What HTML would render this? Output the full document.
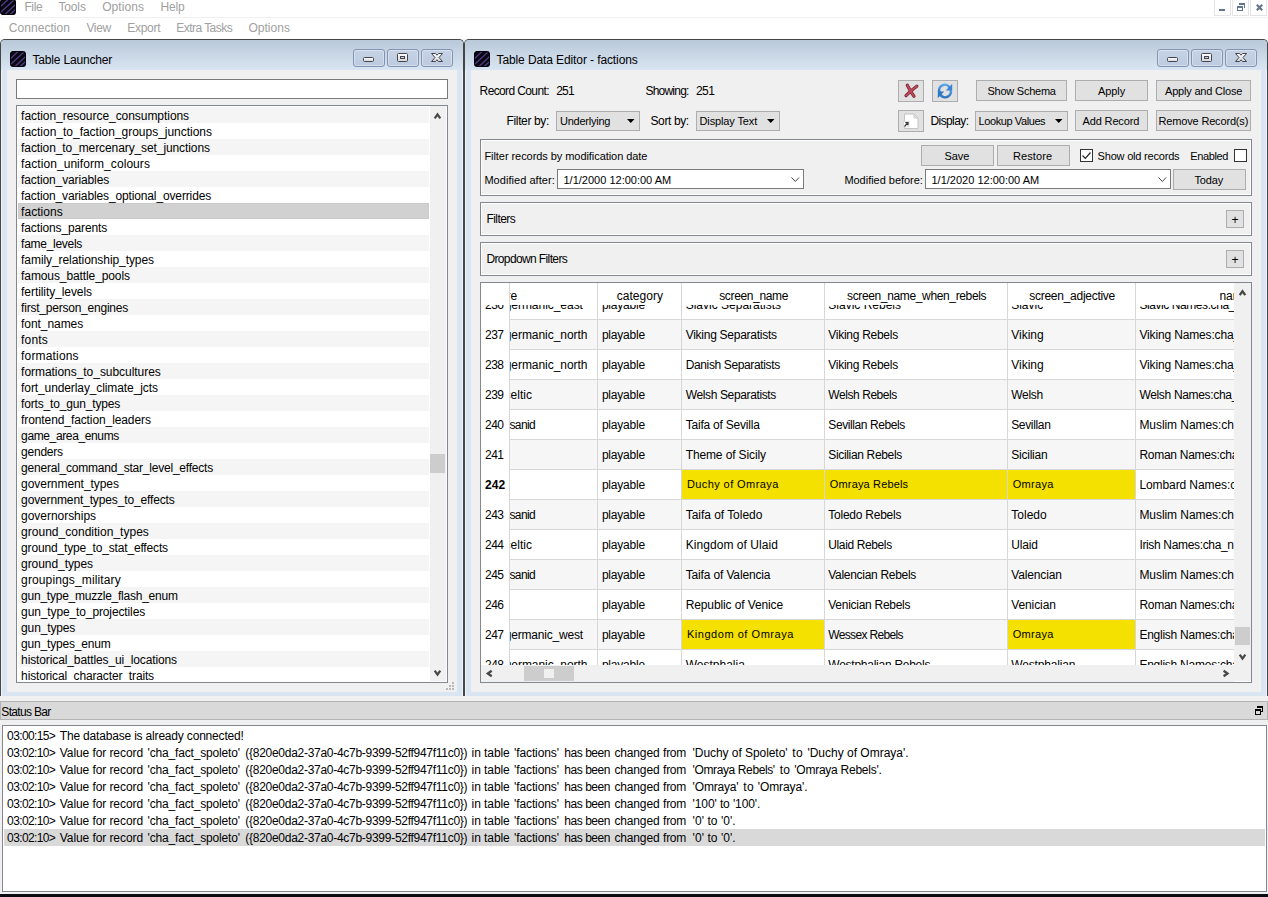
<!DOCTYPE html>
<html><head><meta charset="utf-8"><title>Table Data Editor</title>
<style>
html,body{margin:0;padding:0}
body{width:1268px;height:897px;overflow:hidden;position:relative;background:#f0f0f0;font-family:"Liberation Sans",sans-serif;font-size:12px;color:#000}
.t{position:absolute;white-space:pre;display:block}
.btn{position:absolute;box-sizing:border-box;border:1px solid #adadad;background:#e1e1e1}
.frame{position:absolute;box-sizing:border-box;border:1px solid #828790;box-shadow:inset 1px 1px 0 #fff,inset -1px -1px 0 #fff}
.win{position:absolute;box-sizing:border-box;border:1px solid #454545;border-bottom:none;border-radius:5px 5px 0 0;background:#d9e5f2;overflow:hidden;box-shadow:inset 1px 1px 0 rgba(255,255,255,.6),inset -1px 0 0 rgba(255,255,255,.6)}
.wt{position:absolute;left:0;top:0;right:0;height:30px;background:linear-gradient(#b9c9da,#d9e5f2)}
.tb{position:absolute;box-sizing:border-box;border:1px solid #8493b4;border-radius:3px;background:linear-gradient(#c6d3e5,#bccbe0);box-shadow:inset 0 0 0 1px rgba(255,255,255,.35)}
.clip{position:absolute;overflow:hidden}
</style></head>
<body>
<div style="position:absolute;left:0px;top:0px;width:1268px;height:39px;background:#fff"></div>
<div style="position:absolute;left:0px;top:17px;width:1268px;height:1px;background:#f0f0f0"></div>
<svg width="16" height="16" viewBox="0 0 16 16" style="position:absolute;left:0px;top:-1px"><defs><clipPath id="c0"><rect x="0" y="0" width="16" height="16" rx="3.5"/></clipPath></defs><rect width="16" height="16" rx="3.5" fill="#0a0612"/><g clip-path="url(#c0)" stroke="#4e3f88" stroke-width="1.300"><path d="M-1 9L9 -.4M-1 14.800L16 -.800M3 17.400L17 4.100M8 17.400L17 9.100M13.500 17L17 13.800"/></g><rect x=".5" y=".5" width="15" height="15" rx="3.2" fill="none" stroke="#000" stroke-width="1"/></svg>
<span class="t" style="left:24.4px;top:-1px;height:16px;line-height:16px;font-size:12px;font-weight:normal;color:#a0a0a0;letter-spacing:-0.361px;">File</span>
<span class="t" style="left:58.4px;top:-1px;height:16px;line-height:16px;font-size:12px;font-weight:normal;color:#a0a0a0;letter-spacing:-0.123px;">Tools</span>
<span class="t" style="left:102.2px;top:-1px;height:16px;line-height:16px;font-size:12px;font-weight:normal;color:#a0a0a0;letter-spacing:0.063px;">Options</span>
<span class="t" style="left:160.4px;top:-1px;height:16px;line-height:16px;font-size:12px;font-weight:normal;color:#a0a0a0;letter-spacing:-0.097px;">Help</span>
<span class="t" style="left:8.8px;top:20px;height:16px;line-height:16px;font-size:12px;font-weight:normal;color:#a0a0a0;letter-spacing:0.048px;">Connection</span>
<span class="t" style="left:86.4px;top:20px;height:16px;line-height:16px;font-size:12px;font-weight:normal;color:#a0a0a0;letter-spacing:-0.324px;">View</span>
<span class="t" style="left:127.3px;top:20px;height:16px;line-height:16px;font-size:12px;font-weight:normal;color:#a0a0a0;letter-spacing:-0.298px;">Export</span>
<span class="t" style="left:176.3px;top:20px;height:16px;line-height:16px;font-size:12px;font-weight:normal;color:#a0a0a0;letter-spacing:-0.547px;">Extra Tasks</span>
<span class="t" style="left:248.4px;top:20px;height:16px;line-height:16px;font-size:12px;font-weight:normal;color:#a0a0a0;letter-spacing:0.034px;">Options</span>
<div style="position:absolute;left:1214px;top:-1px;width:17px;height:17px;box-sizing:border-box;border:1px solid #e5e5e5;background:#fff"></div>
<div style="position:absolute;left:1232px;top:-1px;width:17px;height:17px;box-sizing:border-box;border:1px solid #e5e5e5;background:#fff"></div>
<div style="position:absolute;left:1250px;top:-1px;width:17px;height:17px;box-sizing:border-box;border:1px solid #e5e5e5;background:#fff"></div>
<svg width="54" height="16" style="position:absolute;left:1214px;top:0" fill="#64758a"><g shape-rendering="crispEdges"><rect x="5" y="9" width="6" height="2"/><rect x="25" y="3" width="6" height="2"/><rect x="30" y="3" width="1" height="5"/><rect x="23" y="6" width="6" height="2"/><rect x="23" y="6" width="1" height="5"/><rect x="28" y="6" width="1" height="5"/><rect x="23" y="10" width="6" height="1"/></g><path d="M42.800 4.800l5.400 5.400M48.200 4.800l-5.400 5.400" stroke="#64758a" stroke-width="2.100" fill="none"/></svg>
<svg width="0" height="0" style="position:absolute"><defs><linearGradient id="wg" x1="0" y1="0" x2="0" y2="1"><stop offset="0" stop-color="#fff"/><stop offset="1" stop-color="#d4d4d8"/></linearGradient><linearGradient id="bg" x1="0" y1="0" x2="0" y2="1"><stop offset="0" stop-color="#5aa6e6"/><stop offset="1" stop-color="#2a74c0"/></linearGradient></defs></svg>
<div class="win" style="left:0px;top:39px;width:464px;height:657px"><div class="wt"></div></div>
<svg width="16" height="16" viewBox="0 0 16 16" style="position:absolute;left:10px;top:51px"><defs><clipPath id="c1"><rect x="0" y="0" width="16" height="16" rx="3.5"/></clipPath></defs><rect width="16" height="16" rx="3.5" fill="#0a0612"/><g clip-path="url(#c1)" stroke="#4e3f88" stroke-width="1.300"><path d="M-1 9L9 -.4M-1 14.800L16 -.800M3 17.400L17 4.100M8 17.400L17 9.100M13.500 17L17 13.800"/></g><rect x=".5" y=".5" width="15" height="15" rx="3.2" fill="none" stroke="#000" stroke-width="1"/></svg>
<span class="t" style="left:32.5px;top:52px;height:16px;line-height:16px;font-size:12px;font-weight:normal;color:#000;letter-spacing:-0.169px;">Table Launcher</span>
<div class="win" style="left:464px;top:39px;width:804px;height:657px"><div class="wt"></div></div>
<svg width="16" height="16" viewBox="0 0 16 16" style="position:absolute;left:474px;top:51px"><defs><clipPath id="c2"><rect x="0" y="0" width="16" height="16" rx="3.5"/></clipPath></defs><rect width="16" height="16" rx="3.5" fill="#0a0612"/><g clip-path="url(#c2)" stroke="#4e3f88" stroke-width="1.300"><path d="M-1 9L9 -.4M-1 14.800L16 -.800M3 17.400L17 4.100M8 17.400L17 9.100M13.500 17L17 13.800"/></g><rect x=".5" y=".5" width="15" height="15" rx="3.2" fill="none" stroke="#000" stroke-width="1"/></svg>
<span class="t" style="left:496.5px;top:52px;height:16px;line-height:16px;font-size:12px;font-weight:normal;color:#000;letter-spacing:-0.103px;">Table Data Editor - factions</span>
<div style="position:absolute;left:7px;top:70px;width:450px;height:622px;background:#f0f0f0"></div>
<div style="position:absolute;left:471px;top:70px;width:790px;height:622px;background:#f0f0f0"></div>
<div class="tb" style="left:353px;top:49px;width:32px;height:18px"></div>
<svg width="32" height="18" style="position:absolute;left:353px;top:49px"><rect x="10.500" y="8.500" width="10" height="4" rx="1" fill="url(#wg)" stroke="#45454f"/></svg>
<div class="tb" style="left:387px;top:49px;width:32px;height:18px"></div>
<svg width="32" height="18" style="position:absolute;left:387px;top:49px"><rect x="10.500" y="4.500" width="10" height="8" rx="1" fill="url(#wg)" stroke="#45454f"/><rect x="13.500" y="7.500" width="4" height="2" fill="#c3d0e3" stroke="#45454f"/></svg>
<div class="tb" style="left:421px;top:49px;width:32px;height:18px"></div>
<svg width="32" height="18" style="position:absolute;left:421px;top:49px"><path d="M10.500 4.500h4l1.500 1.700 1.500-1.700h4l-3.500 4 3.500 4h-4l-1.500-1.700-1.500 1.700h-4l3.500-4z" fill="url(#wg)" stroke="#45454f" stroke-linejoin="round"/></svg>
<div class="tb" style="left:1157px;top:49px;width:32px;height:18px"></div>
<svg width="32" height="18" style="position:absolute;left:1157px;top:49px"><rect x="10.500" y="8.500" width="10" height="4" rx="1" fill="url(#wg)" stroke="#45454f"/></svg>
<div class="tb" style="left:1191px;top:49px;width:32px;height:18px"></div>
<svg width="32" height="18" style="position:absolute;left:1191px;top:49px"><rect x="10.500" y="4.500" width="10" height="8" rx="1" fill="url(#wg)" stroke="#45454f"/><rect x="13.500" y="7.500" width="4" height="2" fill="#c3d0e3" stroke="#45454f"/></svg>
<div class="tb" style="left:1225px;top:49px;width:32px;height:18px"></div>
<svg width="32" height="18" style="position:absolute;left:1225px;top:49px"><path d="M10.500 4.500h4l1.500 1.700 1.500-1.700h4l-3.500 4 3.500 4h-4l-1.500-1.700-1.500 1.700h-4l3.500-4z" fill="url(#wg)" stroke="#45454f" stroke-linejoin="round"/></svg>
<div style="position:absolute;left:16px;top:79px;width:432px;height:20px;box-sizing:border-box;border:1px solid #7a7a7a;background:#fff"></div>
<div style="position:absolute;left:16px;top:105px;width:432px;height:578px;box-sizing:border-box;border:1px solid #828790;background:#fff"></div>
<div style="position:absolute;left:18px;top:107px;width:411px;height:16px;background:#f5f5f5"></div>
<span class="t" style="left:21.1px;top:107.5px;height:16px;line-height:16px;font-size:12px;font-weight:normal;color:#000;letter-spacing:-0.050px;">faction_resource_consumptions</span>
<span class="t" style="left:21.1px;top:123.5px;height:16px;line-height:16px;font-size:12px;font-weight:normal;color:#000;letter-spacing:-0.016px;">faction_to_faction_groups_junctions</span>
<div style="position:absolute;left:18px;top:139px;width:411px;height:16px;background:#f5f5f5"></div>
<span class="t" style="left:21.1px;top:139.5px;height:16px;line-height:16px;font-size:12px;font-weight:normal;color:#000;letter-spacing:-0.098px;">faction_to_mercenary_set_junctions</span>
<span class="t" style="left:21.1px;top:155.5px;height:16px;line-height:16px;font-size:12px;font-weight:normal;color:#000;letter-spacing:0.065px;">faction_uniform_colours</span>
<div style="position:absolute;left:18px;top:171px;width:411px;height:16px;background:#f5f5f5"></div>
<span class="t" style="left:21.1px;top:171.5px;height:16px;line-height:16px;font-size:12px;font-weight:normal;color:#000;letter-spacing:-0.121px;">faction_variables</span>
<span class="t" style="left:21.1px;top:187.5px;height:16px;line-height:16px;font-size:12px;font-weight:normal;color:#000;letter-spacing:-0.133px;">faction_variables_optional_overrides</span>
<div style="position:absolute;left:18px;top:203px;width:411px;height:16px;box-sizing:border-box;border:1px solid #cbcbcb;background:#d1d1d1"></div>
<span class="t" style="left:21.1px;top:203.5px;height:16px;line-height:16px;font-size:12px;font-weight:normal;color:#000;letter-spacing:0.043px;">factions</span>
<span class="t" style="left:21.1px;top:219.5px;height:16px;line-height:16px;font-size:12px;font-weight:normal;color:#000;letter-spacing:-0.123px;">factions_parents</span>
<div style="position:absolute;left:18px;top:235px;width:411px;height:16px;background:#f5f5f5"></div>
<span class="t" style="left:21.1px;top:235.5px;height:16px;line-height:16px;font-size:12px;font-weight:normal;color:#000;letter-spacing:-0.285px;">fame_levels</span>
<span class="t" style="left:21.1px;top:251.5px;height:16px;line-height:16px;font-size:12px;font-weight:normal;color:#000;letter-spacing:-0.074px;">family_relationship_types</span>
<div style="position:absolute;left:18px;top:267px;width:411px;height:16px;background:#f5f5f5"></div>
<span class="t" style="left:21.1px;top:267.5px;height:16px;line-height:16px;font-size:12px;font-weight:normal;color:#000;letter-spacing:-0.103px;">famous_battle_pools</span>
<span class="t" style="left:21.1px;top:283.5px;height:16px;line-height:16px;font-size:12px;font-weight:normal;color:#000;letter-spacing:-0.071px;">fertility_levels</span>
<div style="position:absolute;left:18px;top:299px;width:411px;height:16px;background:#f5f5f5"></div>
<span class="t" style="left:21.1px;top:299.5px;height:16px;line-height:16px;font-size:12px;font-weight:normal;color:#000;letter-spacing:-0.225px;">first_person_engines</span>
<span class="t" style="left:21.1px;top:315.5px;height:16px;line-height:16px;font-size:12px;font-weight:normal;color:#000;letter-spacing:-0.072px;">font_names</span>
<div style="position:absolute;left:18px;top:331px;width:411px;height:16px;background:#f5f5f5"></div>
<span class="t" style="left:21.1px;top:331.5px;height:16px;line-height:16px;font-size:12px;font-weight:normal;color:#000;letter-spacing:0.177px;">fonts</span>
<span class="t" style="left:21.1px;top:347.5px;height:16px;line-height:16px;font-size:12px;font-weight:normal;color:#000;letter-spacing:0.167px;">formations</span>
<div style="position:absolute;left:18px;top:363px;width:411px;height:16px;background:#f5f5f5"></div>
<span class="t" style="left:21.1px;top:363.5px;height:16px;line-height:16px;font-size:12px;font-weight:normal;color:#000;letter-spacing:-0.042px;">formations_to_subcultures</span>
<span class="t" style="left:21.1px;top:379.5px;height:16px;line-height:16px;font-size:12px;font-weight:normal;color:#000;letter-spacing:-0.104px;">fort_underlay_climate_jcts</span>
<div style="position:absolute;left:18px;top:395px;width:411px;height:16px;background:#f5f5f5"></div>
<span class="t" style="left:21.1px;top:395.5px;height:16px;line-height:16px;font-size:12px;font-weight:normal;color:#000;letter-spacing:-0.171px;">forts_to_gun_types</span>
<span class="t" style="left:21.1px;top:411.5px;height:16px;line-height:16px;font-size:12px;font-weight:normal;color:#000;letter-spacing:-0.100px;">frontend_faction_leaders</span>
<div style="position:absolute;left:18px;top:427px;width:411px;height:16px;background:#f5f5f5"></div>
<span class="t" style="left:21.1px;top:427.5px;height:16px;line-height:16px;font-size:12px;font-weight:normal;color:#000;letter-spacing:-0.374px;">game_area_enums</span>
<span class="t" style="left:21.1px;top:443.5px;height:16px;line-height:16px;font-size:12px;font-weight:normal;color:#000;letter-spacing:-0.239px;">genders</span>
<div style="position:absolute;left:18px;top:459px;width:411px;height:16px;background:#f5f5f5"></div>
<span class="t" style="left:21.1px;top:459.5px;height:16px;line-height:16px;font-size:12px;font-weight:normal;color:#000;letter-spacing:-0.216px;">general_command_star_level_effects</span>
<span class="t" style="left:21.1px;top:475.5px;height:16px;line-height:16px;font-size:12px;font-weight:normal;color:#000;letter-spacing:-0.058px;">government_types</span>
<div style="position:absolute;left:18px;top:491px;width:411px;height:16px;background:#f5f5f5"></div>
<span class="t" style="left:21.1px;top:491.5px;height:16px;line-height:16px;font-size:12px;font-weight:normal;color:#000;letter-spacing:-0.134px;">government_types_to_effects</span>
<span class="t" style="left:21.1px;top:507.5px;height:16px;line-height:16px;font-size:12px;font-weight:normal;color:#000;letter-spacing:-0.037px;">governorships</span>
<div style="position:absolute;left:18px;top:523px;width:411px;height:16px;background:#f5f5f5"></div>
<span class="t" style="left:21.1px;top:523.5px;height:16px;line-height:16px;font-size:12px;font-weight:normal;color:#000;letter-spacing:0.016px;">ground_condition_types</span>
<span class="t" style="left:21.1px;top:539.5px;height:16px;line-height:16px;font-size:12px;font-weight:normal;color:#000;letter-spacing:-0.164px;">ground_type_to_stat_effects</span>
<div style="position:absolute;left:18px;top:555px;width:411px;height:16px;background:#f5f5f5"></div>
<span class="t" style="left:21.1px;top:555.5px;height:16px;line-height:16px;font-size:12px;font-weight:normal;color:#000;letter-spacing:-0.070px;">ground_types</span>
<span class="t" style="left:21.1px;top:571.5px;height:16px;line-height:16px;font-size:12px;font-weight:normal;color:#000;letter-spacing:0.128px;">groupings_military</span>
<div style="position:absolute;left:18px;top:587px;width:411px;height:16px;background:#f5f5f5"></div>
<span class="t" style="left:21.1px;top:587.5px;height:16px;line-height:16px;font-size:12px;font-weight:normal;color:#000;letter-spacing:-0.238px;">gun_type_muzzle_flash_enum</span>
<span class="t" style="left:21.1px;top:603.5px;height:16px;line-height:16px;font-size:12px;font-weight:normal;color:#000;letter-spacing:-0.120px;">gun_type_to_projectiles</span>
<div style="position:absolute;left:18px;top:619px;width:411px;height:16px;background:#f5f5f5"></div>
<span class="t" style="left:21.1px;top:619.5px;height:16px;line-height:16px;font-size:12px;font-weight:normal;color:#000;letter-spacing:-0.143px;">gun_types</span>
<span class="t" style="left:21.1px;top:635.5px;height:16px;line-height:16px;font-size:12px;font-weight:normal;color:#000;letter-spacing:-0.184px;">gun_types_enum</span>
<div style="position:absolute;left:18px;top:651px;width:411px;height:16px;background:#f5f5f5"></div>
<span class="t" style="left:21.1px;top:651.5px;height:16px;line-height:16px;font-size:12px;font-weight:normal;color:#000;letter-spacing:-0.114px;">historical_battles_ui_locations</span>
<span class="t" style="left:21.1px;top:667.5px;height:16px;line-height:16px;font-size:12px;font-weight:normal;color:#000;letter-spacing:-0.142px;height:14px;overflow:hidden;">historical_character_traits</span>
<div style="position:absolute;left:17px;top:681px;width:413px;height:1px;background:#fff"></div>
<div style="position:absolute;left:430px;top:106px;width:16px;height:575px;background:#f0f0f0"></div>
<div style="position:absolute;left:430px;top:454px;width:15px;height:19px;background:#cdcdcd"></div>
<svg width="17" height="576" style="position:absolute;left:430px;top:106px" fill="none" stroke="#484848" stroke-width="2.300"><path d="M4.700 12.300l2.800-3.900 2.800 3.900"/><path d="M4.700 564.700l2.800 3.900 2.800-3.900"/></svg>
<svg width="12" height="12" style="position:absolute;left:445px;top:680px" fill="#b9b9b9" shape-rendering="crispEdges"><rect x="7" y="2" width="2" height="2"/><rect x="4" y="5" width="2" height="2"/><rect x="7" y="5" width="2" height="2"/><rect x="1" y="8" width="2" height="2"/><rect x="4" y="8" width="2" height="2"/><rect x="7" y="8" width="2" height="2"/></svg>
<span class="t" style="left:479.6px;top:83px;height:16px;line-height:16px;font-size:12px;font-weight:normal;color:#000;letter-spacing:-0.621px;">Record Count:</span>
<span class="t" style="left:556.3px;top:83px;height:16px;line-height:16px;font-size:12px;font-weight:normal;color:#000;letter-spacing:-0.877px;">251</span>
<span class="t" style="left:645.4px;top:83px;height:16px;line-height:16px;font-size:12px;font-weight:normal;color:#000;letter-spacing:-0.759px;">Showing:</span>
<span class="t" style="left:696px;top:83px;height:16px;line-height:16px;font-size:12px;font-weight:normal;color:#000;letter-spacing:-0.610px;">251</span>
<span class="t" style="left:506.6px;top:113px;height:16px;line-height:16px;font-size:12px;font-weight:normal;color:#000;letter-spacing:-0.372px;">Filter by:</span>
<span class="t" style="left:650.5px;top:113px;height:16px;line-height:16px;font-size:12px;font-weight:normal;color:#000;letter-spacing:-0.382px;">Sort by:</span>
<div class="btn" style="left:556px;top:111px;width:84px;height:20px"></div>
<span class="t" style="left:560px;top:113px;height:16px;line-height:16px;font-size:11px;font-weight:normal;color:#000;letter-spacing:-0.239px;">Underlying</span>
<svg width="8" height="5" style="position:absolute;left:626.5px;top:119px"><path d="M0 0h7.500l-3.750 4z" fill="#000"/></svg>
<div class="btn" style="left:696px;top:111px;width:84px;height:20px"></div>
<span class="t" style="left:699.5px;top:113px;height:16px;line-height:16px;font-size:11px;font-weight:normal;color:#000;letter-spacing:-0.117px;">Display Text</span>
<svg width="8" height="5" style="position:absolute;left:766.5px;top:119px"><path d="M0 0h7.500l-3.750 4z" fill="#000"/></svg>
<div class="btn" style="left:975px;top:111px;width:93px;height:20px"></div>
<span class="t" style="left:978.5px;top:113px;height:16px;line-height:16px;font-size:11px;font-weight:normal;color:#000;letter-spacing:-0.405px;">Lookup Values</span>
<svg width="8" height="5" style="position:absolute;left:1054.5px;top:119px"><path d="M0 0h7.500l-3.750 4z" fill="#000"/></svg>
<div class="btn" style="left:898px;top:80px;width:26px;height:22px"></div>
<div class="btn" style="left:932px;top:80px;width:26px;height:22px"></div>
<div class="btn" style="left:898px;top:110px;width:26px;height:22px"></div>
<svg width="26" height="22" style="position:absolute;left:898px;top:80px" fill="none" stroke-linecap="round"><path d="M9.300 5.200C11 8.500 13.500 13 16 16.300M18.800 6.200C15 9 11 12.500 8 15.600" stroke="#6e2230" stroke-width="3.200"/><path d="M9.300 5.200C11 8.500 13.500 13 16 16.300M18.800 6.200C15 9 11 12.500 8 15.600" stroke="#c44a5a" stroke-width="1.800"/></svg>
<svg width="26" height="22" style="position:absolute;left:932px;top:80px" fill="none"><path d="M7.600 12.500a5.600 5.600 0 0 1 10-5" stroke="url(#bg)" stroke-width="2.600"/><path d="M18.400 9.500a5.600 5.600 0 0 1-10 5" stroke="url(#bg)" stroke-width="2.600"/><path d="M20.200 3.800v6.600h-6.400z" fill="#3a86d4"/><path d="M5.800 18.200v-6.600h6.400z" fill="#2f78c6"/></svg>
<svg width="26" height="22" style="position:absolute;left:898px;top:110px"><path d="M6.500 4h9.500l4 4v10.500h-13.500z" fill="#fff" stroke="#c4c4c4"/><path d="M16 4v4h4z" fill="#e4e4e4" stroke="#c4c4c4" stroke-width=".8"/><rect x="5.500" y="11.500" width="5.500" height="5.500" fill="#fafafa" stroke="#d0d0d0" stroke-width=".6"/><path d="M6.500 16.500l3.200-3.600M7.300 12.600h2.700v2.700" stroke="#3a3a3a" fill="none" stroke-width="1.200"/></svg>
<span class="t" style="left:930.5px;top:113px;height:16px;line-height:16px;font-size:12px;font-weight:normal;color:#000;letter-spacing:-0.598px;">Display:</span>
<div class="btn" style="left:976px;top:80px;width:91px;height:21px"></div>
<span class="t" style="left:987.5px;top:82.5px;height:16px;line-height:16px;font-size:11px;font-weight:normal;color:#000;letter-spacing:-0.249px;">Show Schema</span>
<div class="btn" style="left:1075px;top:80px;width:73px;height:21px"></div>
<span class="t" style="left:1098px;top:82.5px;height:16px;line-height:16px;font-size:11px;font-weight:normal;color:#000;letter-spacing:-0.066px;">Apply</span>
<div class="btn" style="left:1156px;top:80px;width:95px;height:21px"></div>
<span class="t" style="left:1165px;top:82.5px;height:16px;line-height:16px;font-size:11px;font-weight:normal;color:#000;letter-spacing:-0.194px;">Apply and Close</span>
<div class="btn" style="left:1075px;top:110px;width:73px;height:21px"></div>
<span class="t" style="left:1082.5px;top:112.5px;height:16px;line-height:16px;font-size:11px;font-weight:normal;color:#000;letter-spacing:-0.139px;">Add Record</span>
<div class="btn" style="left:1156px;top:110px;width:95px;height:21px"></div>
<span class="t" style="left:1158.5px;top:112.5px;height:16px;line-height:16px;font-size:11px;font-weight:normal;color:#000;letter-spacing:-0.163px;">Remove Record(s)</span>
<div class="frame" style="left:480px;top:139px;width:772px;height:57px"></div>
<span class="t" style="left:484.4px;top:148px;height:16px;line-height:16px;font-size:11px;font-weight:normal;color:#000;letter-spacing:-0.059px;">Filter records by modification date</span>
<span class="t" style="left:484.4px;top:172px;height:16px;line-height:16px;font-size:11px;font-weight:normal;color:#000;letter-spacing:0.046px;">Modified after:</span>
<span class="t" style="left:844.4px;top:172px;height:16px;line-height:16px;font-size:11px;font-weight:normal;color:#000;letter-spacing:-0.024px;">Modified before:</span>
<div style="position:absolute;left:557px;top:169px;width:247px;height:20px;box-sizing:border-box;border:1px solid #7a7a7a;background:#fff"></div>
<span class="t" style="left:563.5px;top:172px;height:16px;line-height:16px;font-size:11px;font-weight:normal;color:#000;letter-spacing:0.002px;">1/1/2000 12:00:00 AM</span>
<svg width="10" height="6" style="position:absolute;left:790.5px;top:177px" fill="none" stroke="#444" stroke-width="1"><path d="M.5 .5l3.800 4 3.800-4"/></svg>
<div style="position:absolute;left:925px;top:169px;width:246px;height:20px;box-sizing:border-box;border:1px solid #7a7a7a;background:#fff"></div>
<span class="t" style="left:931.5px;top:172px;height:16px;line-height:16px;font-size:11px;font-weight:normal;color:#000;letter-spacing:0.002px;">1/1/2020 12:00:00 AM</span>
<svg width="10" height="6" style="position:absolute;left:1157.5px;top:177px" fill="none" stroke="#444" stroke-width="1"><path d="M.5 .5l3.800 4 3.800-4"/></svg>
<div class="btn" style="left:921px;top:145px;width:73px;height:21px"></div>
<span class="t" style="left:944.5px;top:147.5px;height:16px;line-height:16px;font-size:11px;font-weight:normal;color:#000;letter-spacing:-0.095px;">Save</span>
<div class="btn" style="left:997px;top:145px;width:73px;height:21px"></div>
<span class="t" style="left:1013px;top:147.5px;height:16px;line-height:16px;font-size:11px;font-weight:normal;color:#000;letter-spacing:0.096px;">Restore</span>
<div style="position:absolute;left:1080px;top:149px;width:13px;height:13px;box-sizing:border-box;border:1px solid #333;background:#fff"></div>
<svg width="13" height="13" style="position:absolute;left:1080px;top:149px" fill="none" stroke="#222" stroke-width="1.2"><path d="M2.500 6.500l2.800 2.800 5.200-5.800"/></svg>
<span class="t" style="left:1097.6px;top:148px;height:16px;line-height:16px;font-size:11px;font-weight:normal;color:#000;letter-spacing:-0.200px;">Show old records</span>
<span class="t" style="left:1190.2px;top:148px;height:16px;line-height:16px;font-size:11px;font-weight:normal;color:#000;letter-spacing:-0.368px;">Enabled</span>
<div style="position:absolute;left:1234px;top:149px;width:13px;height:13px;box-sizing:border-box;border:1px solid #333;background:#fff"></div>
<div class="btn" style="left:1173px;top:169px;width:73px;height:21px"></div>
<span class="t" style="left:1194.5px;top:171.5px;height:16px;line-height:16px;font-size:11px;font-weight:normal;color:#000;letter-spacing:-0.132px;">Today</span>
<div class="frame" style="left:480px;top:202px;width:772px;height:34px"></div>
<div class="frame" style="left:480px;top:242px;width:772px;height:34px"></div>
<span class="t" style="left:486.4px;top:211px;height:16px;line-height:16px;font-size:12px;font-weight:normal;color:#000;letter-spacing:-0.553px;">Filters</span>
<span class="t" style="left:486.4px;top:251px;height:16px;line-height:16px;font-size:12px;font-weight:normal;color:#000;letter-spacing:-0.619px;">Dropdown Filters</span>
<div class="btn" style="left:1226px;top:210px;width:18px;height:18px"></div>
<span class="t" style="left:1231.5px;top:212px;height:16px;line-height:16px;font-size:12px;font-weight:normal;color:#000;letter-spacing:0.184px;">+</span>
<div class="btn" style="left:1226px;top:250px;width:18px;height:18px"></div>
<span class="t" style="left:1231.5px;top:252px;height:16px;line-height:16px;font-size:12px;font-weight:normal;color:#000;letter-spacing:0.184px;">+</span>
<div style="position:absolute;left:480px;top:282px;width:772px;height:401px;box-sizing:border-box;border:1px solid #828790;background:#fff"></div>
<div style="position:absolute;left:510px;top:319px;width:724px;height:1px;background:#d7d7d7"></div>
<div style="position:absolute;left:481px;top:290px;width:29px;height:30px;background:#fff"></div>
<span class="t" style="left:485px;top:297px;height:16px;line-height:16px;font-size:12px;font-weight:normal;color:#000;letter-spacing:-0.544px;">236</span>
<div class="clip" style="left:510px;top:290px;width:87px;height:29px">
<span class="t" style="left:1.3px;top:7px;height:16px;line-height:16px;font-size:12px;font-weight:normal;color:#000;letter-spacing:-0.037px;"><span style="position:absolute;right:100%;top:0">att_sub_cult_barbarian_g</span>ermanic_east</span>
</div>
<span class="t" style="left:601.9px;top:297px;height:16px;line-height:16px;font-size:12px;font-weight:normal;color:#000;letter-spacing:-0.200px;">playable</span>
<span class="t" style="left:685.7px;top:297px;height:16px;line-height:16px;font-size:12px;font-weight:normal;color:#000;letter-spacing:0.000px;">Slavic Separatists</span>
<span class="t" style="left:828.3px;top:297px;height:16px;line-height:16px;font-size:12px;font-weight:normal;color:#000;letter-spacing:0.000px;">Slavic Rebels</span>
<span class="t" style="left:1011.2px;top:297px;height:16px;line-height:16px;font-size:12px;font-weight:normal;color:#000;letter-spacing:0.000px;">Slavic</span>
<span class="t" style="left:1139.4px;top:297px;height:16px;line-height:16px;font-size:12px;font-weight:normal;color:#000;letter-spacing:-0.422px;width:94.6px;overflow:hidden;">Slavic Names:cha_names_slavic</span>
<div style="position:absolute;left:510px;top:320px;width:724px;height:29px;background:#f6f6f6"></div>
<div style="position:absolute;left:510px;top:349px;width:724px;height:1px;background:#d7d7d7"></div>
<div style="position:absolute;left:481px;top:320px;width:29px;height:30px;background:#fff"></div>
<span class="t" style="left:485px;top:327px;height:16px;line-height:16px;font-size:12px;font-weight:normal;color:#000;letter-spacing:-0.544px;">237</span>
<div class="clip" style="left:510px;top:320px;width:87px;height:29px">
<span class="t" style="left:1.3px;top:7px;height:16px;line-height:16px;font-size:12px;font-weight:normal;color:#000;letter-spacing:-0.040px;"><span style="position:absolute;right:100%;top:0">att_sub_cult_barbarian_g</span>ermanic_north</span>
</div>
<span class="t" style="left:601.9px;top:327px;height:16px;line-height:16px;font-size:12px;font-weight:normal;color:#000;letter-spacing:-0.200px;">playable</span>
<span class="t" style="left:685.7px;top:327px;height:16px;line-height:16px;font-size:12px;font-weight:normal;color:#000;letter-spacing:-0.269px;">Viking Separatists</span>
<span class="t" style="left:828.3px;top:327px;height:16px;line-height:16px;font-size:12px;font-weight:normal;color:#000;letter-spacing:-0.274px;">Viking Rebels</span>
<span class="t" style="left:1011.2px;top:327px;height:16px;line-height:16px;font-size:12px;font-weight:normal;color:#000;letter-spacing:0.005px;">Viking</span>
<span class="t" style="left:1139.4px;top:327px;height:16px;line-height:16px;font-size:12px;font-weight:normal;color:#000;letter-spacing:-0.150px;width:94.6px;overflow:hidden;">Viking Names:cha_names_viking</span>
<div style="position:absolute;left:510px;top:379px;width:724px;height:1px;background:#d7d7d7"></div>
<div style="position:absolute;left:481px;top:350px;width:29px;height:30px;background:#fff"></div>
<span class="t" style="left:485px;top:357px;height:16px;line-height:16px;font-size:12px;font-weight:normal;color:#000;letter-spacing:-0.544px;">238</span>
<div class="clip" style="left:510px;top:350px;width:87px;height:29px">
<span class="t" style="left:1.3px;top:7px;height:16px;line-height:16px;font-size:12px;font-weight:normal;color:#000;letter-spacing:-0.040px;"><span style="position:absolute;right:100%;top:0">att_sub_cult_barbarian_g</span>ermanic_north</span>
</div>
<span class="t" style="left:601.9px;top:357px;height:16px;line-height:16px;font-size:12px;font-weight:normal;color:#000;letter-spacing:-0.200px;">playable</span>
<span class="t" style="left:685.7px;top:357px;height:16px;line-height:16px;font-size:12px;font-weight:normal;color:#000;letter-spacing:-0.368px;">Danish Separatists</span>
<span class="t" style="left:828.3px;top:357px;height:16px;line-height:16px;font-size:12px;font-weight:normal;color:#000;letter-spacing:-0.274px;">Viking Rebels</span>
<span class="t" style="left:1011.2px;top:357px;height:16px;line-height:16px;font-size:12px;font-weight:normal;color:#000;letter-spacing:0.005px;">Viking</span>
<span class="t" style="left:1139.4px;top:357px;height:16px;line-height:16px;font-size:12px;font-weight:normal;color:#000;letter-spacing:-0.150px;width:94.6px;overflow:hidden;">Viking Names:cha_names_viking</span>
<div style="position:absolute;left:510px;top:380px;width:724px;height:29px;background:#f6f6f6"></div>
<div style="position:absolute;left:510px;top:409px;width:724px;height:1px;background:#d7d7d7"></div>
<div style="position:absolute;left:481px;top:380px;width:29px;height:30px;background:#fff"></div>
<span class="t" style="left:485px;top:387px;height:16px;line-height:16px;font-size:12px;font-weight:normal;color:#000;letter-spacing:-0.544px;">239</span>
<div class="clip" style="left:510px;top:380px;width:87px;height:29px">
<span class="t" style="left:0.6px;top:7px;height:16px;line-height:16px;font-size:12px;font-weight:normal;color:#000;letter-spacing:-0.009px;"><span style="position:absolute;right:100%;top:0">att_sub_cult_barbarian_c</span>eltic</span>
</div>
<span class="t" style="left:601.9px;top:387px;height:16px;line-height:16px;font-size:12px;font-weight:normal;color:#000;letter-spacing:-0.200px;">playable</span>
<span class="t" style="left:685.7px;top:387px;height:16px;line-height:16px;font-size:12px;font-weight:normal;color:#000;letter-spacing:-0.365px;">Welsh Separatists</span>
<span class="t" style="left:828.3px;top:387px;height:16px;line-height:16px;font-size:12px;font-weight:normal;color:#000;letter-spacing:-0.434px;">Welsh Rebels</span>
<span class="t" style="left:1011.2px;top:387px;height:16px;line-height:16px;font-size:12px;font-weight:normal;color:#000;letter-spacing:-0.265px;">Welsh</span>
<span class="t" style="left:1139.4px;top:387px;height:16px;line-height:16px;font-size:12px;font-weight:normal;color:#000;letter-spacing:-0.324px;width:94.6px;overflow:hidden;">Welsh Names:cha_names_welsh</span>
<div style="position:absolute;left:510px;top:439px;width:724px;height:1px;background:#d7d7d7"></div>
<div style="position:absolute;left:481px;top:410px;width:29px;height:30px;background:#fff"></div>
<span class="t" style="left:485px;top:417px;height:16px;line-height:16px;font-size:12px;font-weight:normal;color:#000;letter-spacing:-0.544px;">240</span>
<div class="clip" style="left:510px;top:410px;width:87px;height:29px">
<span class="t" style="left:-0.6px;top:7px;height:16px;line-height:16px;font-size:12px;font-weight:normal;color:#000;letter-spacing:-0.577px;"><span style="position:absolute;right:100%;top:0">att_sub_cult_eastern_sas</span>sanid</span>
</div>
<span class="t" style="left:601.9px;top:417px;height:16px;line-height:16px;font-size:12px;font-weight:normal;color:#000;letter-spacing:-0.200px;">playable</span>
<span class="t" style="left:685.7px;top:417px;height:16px;line-height:16px;font-size:12px;font-weight:normal;color:#000;letter-spacing:-0.217px;">Taifa of Sevilla</span>
<span class="t" style="left:828.3px;top:417px;height:16px;line-height:16px;font-size:12px;font-weight:normal;color:#000;letter-spacing:-0.408px;">Sevillan Rebels</span>
<span class="t" style="left:1011.2px;top:417px;height:16px;line-height:16px;font-size:12px;font-weight:normal;color:#000;letter-spacing:-0.341px;">Sevillan</span>
<span class="t" style="left:1139.4px;top:417px;height:16px;line-height:16px;font-size:12px;font-weight:normal;color:#000;letter-spacing:-0.057px;width:94.6px;overflow:hidden;">Muslim Names:cha_names_muslim</span>
<div style="position:absolute;left:510px;top:440px;width:724px;height:29px;background:#f6f6f6"></div>
<div style="position:absolute;left:510px;top:469px;width:724px;height:1px;background:#d7d7d7"></div>
<div style="position:absolute;left:481px;top:440px;width:29px;height:30px;background:#fff"></div>
<span class="t" style="left:485px;top:447px;height:16px;line-height:16px;font-size:12px;font-weight:normal;color:#000;letter-spacing:-0.544px;">241</span>
<span class="t" style="left:601.9px;top:447px;height:16px;line-height:16px;font-size:12px;font-weight:normal;color:#000;letter-spacing:-0.200px;">playable</span>
<span class="t" style="left:685.7px;top:447px;height:16px;line-height:16px;font-size:12px;font-weight:normal;color:#000;letter-spacing:-0.122px;">Theme of Sicily</span>
<span class="t" style="left:828.3px;top:447px;height:16px;line-height:16px;font-size:12px;font-weight:normal;color:#000;letter-spacing:-0.340px;">Sicilian Rebels</span>
<span class="t" style="left:1011.2px;top:447px;height:16px;line-height:16px;font-size:12px;font-weight:normal;color:#000;letter-spacing:-0.214px;">Sicilian</span>
<span class="t" style="left:1139.4px;top:447px;height:16px;line-height:16px;font-size:12px;font-weight:normal;color:#000;letter-spacing:-0.268px;width:94.6px;overflow:hidden;">Roman Names:cha_names_roman</span>
<div style="position:absolute;left:510px;top:499px;width:724px;height:1px;background:#d7d7d7"></div>
<div style="position:absolute;left:682px;top:470px;width:142px;height:29px;background:#f5e100"></div>
<div style="position:absolute;left:825px;top:470px;width:182px;height:29px;background:#f5e100"></div>
<div style="position:absolute;left:1008px;top:470px;width:127px;height:29px;background:#f5e100"></div>
<div style="position:absolute;left:481px;top:470px;width:29px;height:30px;background:#fff"></div>
<span class="t" style="left:485px;top:477px;height:16px;line-height:16px;font-size:12px;font-weight:bold;color:#000;letter-spacing:0.123px;">242</span>
<span class="t" style="left:601.9px;top:477px;height:16px;line-height:16px;font-size:12px;font-weight:normal;color:#000;letter-spacing:-0.200px;">playable</span>
<span class="t" style="left:686.9px;top:475.5px;height:16px;line-height:16px;font-size:11px;font-weight:normal;color:#000;letter-spacing:0.414px;">Duchy of Omraya</span>
<span class="t" style="left:829.8px;top:475.5px;height:16px;line-height:16px;font-size:11px;font-weight:normal;color:#000;letter-spacing:0.152px;">Omraya Rebels</span>
<span class="t" style="left:1012.7px;top:475.5px;height:16px;line-height:16px;font-size:11px;font-weight:normal;color:#000;letter-spacing:0.329px;">Omraya</span>
<span class="t" style="left:1139.4px;top:477px;height:16px;line-height:16px;font-size:12px;font-weight:normal;color:#000;letter-spacing:-0.089px;width:94.6px;overflow:hidden;">Lombard Names:cha_names_lombard</span>
<div style="position:absolute;left:510px;top:500px;width:724px;height:29px;background:#f6f6f6"></div>
<div style="position:absolute;left:510px;top:529px;width:724px;height:1px;background:#d7d7d7"></div>
<div style="position:absolute;left:481px;top:500px;width:29px;height:30px;background:#fff"></div>
<span class="t" style="left:485px;top:507px;height:16px;line-height:16px;font-size:12px;font-weight:normal;color:#000;letter-spacing:-0.544px;">243</span>
<div class="clip" style="left:510px;top:500px;width:87px;height:29px">
<span class="t" style="left:-0.6px;top:7px;height:16px;line-height:16px;font-size:12px;font-weight:normal;color:#000;letter-spacing:-0.577px;"><span style="position:absolute;right:100%;top:0">att_sub_cult_eastern_sas</span>sanid</span>
</div>
<span class="t" style="left:601.9px;top:507px;height:16px;line-height:16px;font-size:12px;font-weight:normal;color:#000;letter-spacing:-0.200px;">playable</span>
<span class="t" style="left:685.7px;top:507px;height:16px;line-height:16px;font-size:12px;font-weight:normal;color:#000;letter-spacing:-0.038px;">Taifa of Toledo</span>
<span class="t" style="left:828.3px;top:507px;height:16px;line-height:16px;font-size:12px;font-weight:normal;color:#000;letter-spacing:-0.243px;">Toledo Rebels</span>
<span class="t" style="left:1011.2px;top:507px;height:16px;line-height:16px;font-size:12px;font-weight:normal;color:#000;letter-spacing:0.037px;">Toledo</span>
<span class="t" style="left:1139.4px;top:507px;height:16px;line-height:16px;font-size:12px;font-weight:normal;color:#000;letter-spacing:-0.057px;width:94.6px;overflow:hidden;">Muslim Names:cha_names_muslim</span>
<div style="position:absolute;left:510px;top:559px;width:724px;height:1px;background:#d7d7d7"></div>
<div style="position:absolute;left:481px;top:530px;width:29px;height:30px;background:#fff"></div>
<span class="t" style="left:485px;top:537px;height:16px;line-height:16px;font-size:12px;font-weight:normal;color:#000;letter-spacing:-0.544px;">244</span>
<div class="clip" style="left:510px;top:530px;width:87px;height:29px">
<span class="t" style="left:0.6px;top:7px;height:16px;line-height:16px;font-size:12px;font-weight:normal;color:#000;letter-spacing:-0.009px;"><span style="position:absolute;right:100%;top:0">att_sub_cult_barbarian_c</span>eltic</span>
</div>
<span class="t" style="left:601.9px;top:537px;height:16px;line-height:16px;font-size:12px;font-weight:normal;color:#000;letter-spacing:-0.200px;">playable</span>
<span class="t" style="left:685.7px;top:537px;height:16px;line-height:16px;font-size:12px;font-weight:normal;color:#000;letter-spacing:0.057px;">Kingdom of Ulaid</span>
<span class="t" style="left:828.3px;top:537px;height:16px;line-height:16px;font-size:12px;font-weight:normal;color:#000;letter-spacing:-0.379px;">Ulaid Rebels</span>
<span class="t" style="left:1011.2px;top:537px;height:16px;line-height:16px;font-size:12px;font-weight:normal;color:#000;letter-spacing:-0.132px;">Ulaid</span>
<span class="t" style="left:1139.4px;top:537px;height:16px;line-height:16px;font-size:12px;font-weight:normal;color:#000;letter-spacing:-0.338px;width:94.6px;overflow:hidden;">Irish Names:cha_names_irish</span>
<div style="position:absolute;left:510px;top:560px;width:724px;height:29px;background:#f6f6f6"></div>
<div style="position:absolute;left:510px;top:589px;width:724px;height:1px;background:#d7d7d7"></div>
<div style="position:absolute;left:481px;top:560px;width:29px;height:30px;background:#fff"></div>
<span class="t" style="left:485px;top:567px;height:16px;line-height:16px;font-size:12px;font-weight:normal;color:#000;letter-spacing:-0.544px;">245</span>
<div class="clip" style="left:510px;top:560px;width:87px;height:29px">
<span class="t" style="left:-0.6px;top:7px;height:16px;line-height:16px;font-size:12px;font-weight:normal;color:#000;letter-spacing:-0.577px;"><span style="position:absolute;right:100%;top:0">att_sub_cult_eastern_sas</span>sanid</span>
</div>
<span class="t" style="left:601.9px;top:567px;height:16px;line-height:16px;font-size:12px;font-weight:normal;color:#000;letter-spacing:-0.200px;">playable</span>
<span class="t" style="left:685.7px;top:567px;height:16px;line-height:16px;font-size:12px;font-weight:normal;color:#000;letter-spacing:-0.145px;">Taifa of Valencia</span>
<span class="t" style="left:828.3px;top:567px;height:16px;line-height:16px;font-size:12px;font-weight:normal;color:#000;letter-spacing:-0.301px;">Valencian Rebels</span>
<span class="t" style="left:1011.2px;top:567px;height:16px;line-height:16px;font-size:12px;font-weight:normal;color:#000;letter-spacing:-0.125px;">Valencian</span>
<span class="t" style="left:1139.4px;top:567px;height:16px;line-height:16px;font-size:12px;font-weight:normal;color:#000;letter-spacing:-0.057px;width:94.6px;overflow:hidden;">Muslim Names:cha_names_muslim</span>
<div style="position:absolute;left:510px;top:619px;width:724px;height:1px;background:#d7d7d7"></div>
<div style="position:absolute;left:481px;top:590px;width:29px;height:30px;background:#fff"></div>
<span class="t" style="left:485px;top:597px;height:16px;line-height:16px;font-size:12px;font-weight:normal;color:#000;letter-spacing:-0.544px;">246</span>
<span class="t" style="left:601.9px;top:597px;height:16px;line-height:16px;font-size:12px;font-weight:normal;color:#000;letter-spacing:-0.200px;">playable</span>
<span class="t" style="left:685.7px;top:597px;height:16px;line-height:16px;font-size:12px;font-weight:normal;color:#000;letter-spacing:-0.117px;">Republic of Venice</span>
<span class="t" style="left:828.3px;top:597px;height:16px;line-height:16px;font-size:12px;font-weight:normal;color:#000;letter-spacing:-0.277px;">Venician Rebels</span>
<span class="t" style="left:1011.2px;top:597px;height:16px;line-height:16px;font-size:12px;font-weight:normal;color:#000;letter-spacing:-0.097px;">Venician</span>
<span class="t" style="left:1139.4px;top:597px;height:16px;line-height:16px;font-size:12px;font-weight:normal;color:#000;letter-spacing:-0.268px;width:94.6px;overflow:hidden;">Roman Names:cha_names_roman</span>
<div style="position:absolute;left:510px;top:620px;width:724px;height:29px;background:#f6f6f6"></div>
<div style="position:absolute;left:510px;top:649px;width:724px;height:1px;background:#d7d7d7"></div>
<div style="position:absolute;left:682px;top:620px;width:142px;height:29px;background:#f5e100"></div>
<div style="position:absolute;left:1008px;top:620px;width:127px;height:29px;background:#f5e100"></div>
<div style="position:absolute;left:481px;top:620px;width:29px;height:30px;background:#fff"></div>
<span class="t" style="left:485px;top:627px;height:16px;line-height:16px;font-size:12px;font-weight:normal;color:#000;letter-spacing:-0.544px;">247</span>
<div class="clip" style="left:510px;top:620px;width:87px;height:29px">
<span class="t" style="left:1.3px;top:7px;height:16px;line-height:16px;font-size:12px;font-weight:normal;color:#000;letter-spacing:-0.203px;"><span style="position:absolute;right:100%;top:0">att_sub_cult_barbarian_g</span>ermanic_west</span>
</div>
<span class="t" style="left:601.9px;top:627px;height:16px;line-height:16px;font-size:12px;font-weight:normal;color:#000;letter-spacing:-0.200px;">playable</span>
<span class="t" style="left:686.9px;top:625.5px;height:16px;line-height:16px;font-size:11px;font-weight:normal;color:#000;letter-spacing:0.540px;">Kingdom of Omraya</span>
<span class="t" style="left:828.3px;top:627px;height:16px;line-height:16px;font-size:12px;font-weight:normal;color:#000;letter-spacing:-0.658px;">Wessex Rebels</span>
<span class="t" style="left:1012.7px;top:625.5px;height:16px;line-height:16px;font-size:11px;font-weight:normal;color:#000;letter-spacing:0.329px;">Omraya</span>
<span class="t" style="left:1139.4px;top:627px;height:16px;line-height:16px;font-size:12px;font-weight:normal;color:#000;letter-spacing:-0.245px;width:94.6px;overflow:hidden;">English Names:cha_names_english</span>
<div style="position:absolute;left:510px;top:679px;width:724px;height:1px;background:#d7d7d7"></div>
<div style="position:absolute;left:481px;top:650px;width:29px;height:30px;background:#fff"></div>
<span class="t" style="left:485px;top:657px;height:16px;line-height:16px;font-size:12px;font-weight:normal;color:#000;letter-spacing:-0.544px;">248</span>
<div class="clip" style="left:510px;top:650px;width:87px;height:29px">
<span class="t" style="left:1.3px;top:7px;height:16px;line-height:16px;font-size:12px;font-weight:normal;color:#000;letter-spacing:-0.040px;"><span style="position:absolute;right:100%;top:0">att_sub_cult_barbarian_g</span>ermanic_north</span>
</div>
<span class="t" style="left:601.9px;top:657px;height:16px;line-height:16px;font-size:12px;font-weight:normal;color:#000;letter-spacing:-0.200px;">playable</span>
<span class="t" style="left:685.7px;top:657px;height:16px;line-height:16px;font-size:12px;font-weight:normal;color:#000;letter-spacing:0.000px;">Westphalia</span>
<span class="t" style="left:828.3px;top:657px;height:16px;line-height:16px;font-size:12px;font-weight:normal;color:#000;letter-spacing:-0.256px;">Westphalian Rebels</span>
<span class="t" style="left:1011.2px;top:657px;height:16px;line-height:16px;font-size:12px;font-weight:normal;color:#000;letter-spacing:-0.166px;">Westphalian</span>
<span class="t" style="left:1139.4px;top:657px;height:16px;line-height:16px;font-size:12px;font-weight:normal;color:#000;letter-spacing:-0.245px;width:94.6px;overflow:hidden;">English Names:cha_names_english</span>
<div style="position:absolute;left:481px;top:283px;width:29px;height:382px;background:#fff"></div>
<span class="t" style="left:485px;top:297px;height:16px;line-height:16px;font-size:12px;font-weight:normal;color:#000;letter-spacing:-0.544px;">236</span>
<span class="t" style="left:485px;top:327px;height:16px;line-height:16px;font-size:12px;font-weight:normal;color:#000;letter-spacing:-0.544px;">237</span>
<span class="t" style="left:485px;top:357px;height:16px;line-height:16px;font-size:12px;font-weight:normal;color:#000;letter-spacing:-0.544px;">238</span>
<span class="t" style="left:485px;top:387px;height:16px;line-height:16px;font-size:12px;font-weight:normal;color:#000;letter-spacing:-0.544px;">239</span>
<span class="t" style="left:485px;top:417px;height:16px;line-height:16px;font-size:12px;font-weight:normal;color:#000;letter-spacing:-0.544px;">240</span>
<span class="t" style="left:485px;top:447px;height:16px;line-height:16px;font-size:12px;font-weight:normal;color:#000;letter-spacing:-0.544px;">241</span>
<span class="t" style="left:485px;top:477px;height:16px;line-height:16px;font-size:12px;font-weight:bold;color:#000;letter-spacing:0.123px;">242</span>
<span class="t" style="left:485px;top:507px;height:16px;line-height:16px;font-size:12px;font-weight:normal;color:#000;letter-spacing:-0.544px;">243</span>
<span class="t" style="left:485px;top:537px;height:16px;line-height:16px;font-size:12px;font-weight:normal;color:#000;letter-spacing:-0.544px;">244</span>
<span class="t" style="left:485px;top:567px;height:16px;line-height:16px;font-size:12px;font-weight:normal;color:#000;letter-spacing:-0.544px;">245</span>
<span class="t" style="left:485px;top:597px;height:16px;line-height:16px;font-size:12px;font-weight:normal;color:#000;letter-spacing:-0.544px;">246</span>
<span class="t" style="left:485px;top:627px;height:16px;line-height:16px;font-size:12px;font-weight:normal;color:#000;letter-spacing:-0.544px;">247</span>
<span class="t" style="left:485px;top:657px;height:16px;line-height:16px;font-size:12px;font-weight:normal;color:#000;letter-spacing:-0.544px;">248</span>
<div style="position:absolute;left:597px;top:283px;width:1px;height:382px;background:#d7d7d7"></div>
<div style="position:absolute;left:681px;top:283px;width:1px;height:382px;background:#d7d7d7"></div>
<div style="position:absolute;left:824px;top:283px;width:1px;height:382px;background:#d7d7d7"></div>
<div style="position:absolute;left:1007px;top:283px;width:1px;height:382px;background:#d7d7d7"></div>
<div style="position:absolute;left:1135px;top:283px;width:1px;height:382px;background:#d7d7d7"></div>
<div style="position:absolute;left:509px;top:283px;width:1px;height:382px;background:#d7d7d7"></div>
<div style="position:absolute;left:481px;top:283px;width:753px;height:22px;background:#fff"></div>
<div style="position:absolute;left:597px;top:283px;width:1px;height:22px;background:#d7d7d7"></div>
<div style="position:absolute;left:681px;top:283px;width:1px;height:22px;background:#d7d7d7"></div>
<div style="position:absolute;left:824px;top:283px;width:1px;height:22px;background:#d7d7d7"></div>
<div style="position:absolute;left:1007px;top:283px;width:1px;height:22px;background:#d7d7d7"></div>
<div style="position:absolute;left:1135px;top:283px;width:1px;height:22px;background:#d7d7d7"></div>
<div class="clip" style="left:510px;top:283px;width:87px;height:22px">
<span class="t" style="left:0.4px;top:4.5px;height:16px;line-height:16px;font-size:12px;font-weight:normal;color:#000;letter-spacing:0.000px;"><span style="position:absolute;right:100%;top:0">subcultur</span>e</span>
</div>
<div style="position:absolute;left:481px;top:283px;width:29px;height:22px;background:#fff"></div>
<div style="position:absolute;left:509px;top:283px;width:1px;height:22px;background:#d7d7d7"></div>
<span class="t" style="left:616.7px;top:287.5px;height:16px;line-height:16px;font-size:12px;font-weight:normal;color:#000;letter-spacing:0.034px;">category</span>
<span class="t" style="left:719.2px;top:287.5px;height:16px;line-height:16px;font-size:12px;font-weight:normal;color:#000;letter-spacing:-0.347px;">screen_name</span>
<span class="t" style="left:847px;top:287.5px;height:16px;line-height:16px;font-size:12px;font-weight:normal;color:#000;letter-spacing:-0.358px;">screen_name_when_rebels</span>
<span class="t" style="left:1029.3px;top:287.5px;height:16px;line-height:16px;font-size:12px;font-weight:normal;color:#000;letter-spacing:-0.273px;">screen_adjective</span>
<span class="t" style="left:1219.4px;top:287.5px;height:16px;line-height:16px;font-size:12px;font-weight:normal;color:#000;letter-spacing:0.000px;width:14.6px;overflow:hidden;">name_group</span>
<div style="position:absolute;left:1234px;top:283px;width:17px;height:382px;background:#f0f0f0"></div>
<div style="position:absolute;left:1235px;top:627px;width:15px;height:18px;background:#cdcdcd"></div>
<svg width="17" height="382" style="position:absolute;left:1234px;top:283px" fill="none" stroke="#484848" stroke-width="2.300"><path d="M5.700 12.200l2.800-3.900 2.800 3.900"/><path d="M5.700 371.700l2.800 3.900 2.800-3.900"/></svg>
<div style="position:absolute;left:481px;top:665px;width:770px;height:17px;background:#f0f0f0"></div>
<div style="position:absolute;left:524px;top:666px;width:50px;height:15px;background:#cdcdcd"></div>
<div style="position:absolute;left:544px;top:669px;width:10px;height:9px;background:#f0f0f0"></div>
<svg width="770" height="17" style="position:absolute;left:481px;top:665px" fill="none" stroke="#484848" stroke-width="2.300"><path d="M10.700 5.700l-3.900 2.800 3.900 2.800"/><path d="M742.600 5.700l3.900 2.800-3.900 2.800"/></svg>
<div style="position:absolute;left:1234px;top:681px;width:17px;height:1px;background:#fff"></div>
<div style="position:absolute;left:0px;top:696px;width:1268px;height:201px;background:#f0f0f0"></div>
<div style="position:absolute;left:0px;top:701px;width:1268px;height:19px;box-sizing:border-box;border:1px solid #b4b4b4;background:#d9d9d9"></div>
<span class="t" style="left:1.3px;top:703.5px;height:16px;line-height:16px;font-size:12px;font-weight:normal;color:#000;letter-spacing:-0.663px;">Status Bar</span>
<svg width="10" height="10" style="position:absolute;left:1254px;top:706px" shape-rendering="crispEdges" fill="#000"><rect x="3" y="0" width="6" height="2"/><rect x="8" y="0" width="1" height="6"/><rect x="7" y="5" width="2" height="1"/><rect x="1" y="3" width="6" height="2"/><rect x="1" y="3" width="1" height="6"/><rect x="6" y="3" width="1" height="6"/><rect x="1" y="8" width="6" height="1"/></svg>
<div style="position:absolute;left:2px;top:725px;width:1265px;height:167px;box-sizing:border-box;border:1px solid #828790;background:#fff"></div>
<div style="position:absolute;left:4px;top:829px;width:1261px;height:17px;background:#d9d9d9"></div>
<div style="position:absolute;left:0;top:727px;width:1264px;height:17px">
<span class="t" style="left:7.1px;top:1px;height:17px;line-height:17px;font-size:12px;font-weight:normal;color:#000;letter-spacing:-0.624px;">03:00:15&gt; </span>
<span class="t" style="left:59.8px;top:1px;height:17px;line-height:17px;font-size:12px;font-weight:normal;color:#000;letter-spacing:-0.183px;">The database is already connected!</span>
</div>
<div style="position:absolute;left:0;top:744px;width:1264px;height:17px">
<span class="t" style="left:7.1px;top:1px;height:17px;line-height:17px;font-size:12px;font-weight:normal;color:#000;letter-spacing:-0.624px;">03:02:10&gt; </span>
<span class="t" style="left:59.8px;top:1px;height:17px;line-height:17px;font-size:12px;font-weight:normal;color:#000;letter-spacing:-0.081px;">Value for record </span>
<span class="t" style="left:147.6px;top:1px;height:17px;line-height:17px;font-size:12px;font-weight:normal;color:#000;letter-spacing:-0.168px;">&#x27;cha_fact_spoleto&#x27; </span>
<span class="t" style="left:245.3px;top:1px;height:17px;line-height:17px;font-size:12px;font-weight:normal;color:#000;letter-spacing:-0.277px;">({820e0da2-37a0-4c7b-9399-52ff947f11c0}) </span>
<span class="t" style="left:471.6px;top:1px;height:17px;line-height:17px;font-size:12px;font-weight:normal;color:#000;letter-spacing:-0.075px;">in table </span>
<span class="t" style="left:514px;top:1px;height:17px;line-height:17px;font-size:12px;font-weight:normal;color:#000;letter-spacing:-0.104px;">&#x27;factions&#x27; </span>
<span class="t" style="left:564.2px;top:1px;height:17px;line-height:17px;font-size:12px;font-weight:normal;color:#000;letter-spacing:-0.436px;">has been </span>
<span class="t" style="left:614.4px;top:1px;height:17px;line-height:17px;font-size:12px;font-weight:normal;color:#000;letter-spacing:-0.135px;">changed </span>
<span class="t" style="left:663.1px;top:1px;height:17px;line-height:17px;font-size:12px;font-weight:normal;color:#000;letter-spacing:-0.275px;">from </span>
<span class="t" style="left:692.6px;top:1px;height:17px;line-height:17px;font-size:12px;font-weight:normal;color:#000;letter-spacing:-0.060px;">&#x27;Duchy of Spoleto&#x27; </span>
<span class="t" style="left:792.3px;top:1px;height:17px;line-height:17px;font-size:12px;font-weight:normal;color:#000;letter-spacing:0.292px;">to </span>
<span class="t" style="left:807.4px;top:1px;height:17px;line-height:17px;font-size:12px;font-weight:normal;color:#000;letter-spacing:-0.005px;">&#x27;Duchy of Omraya&#x27;.</span>
</div>
<div style="position:absolute;left:0;top:761px;width:1264px;height:17px">
<span class="t" style="left:7.1px;top:1px;height:17px;line-height:17px;font-size:12px;font-weight:normal;color:#000;letter-spacing:-0.624px;">03:02:10&gt; </span>
<span class="t" style="left:59.8px;top:1px;height:17px;line-height:17px;font-size:12px;font-weight:normal;color:#000;letter-spacing:-0.081px;">Value for record </span>
<span class="t" style="left:147.6px;top:1px;height:17px;line-height:17px;font-size:12px;font-weight:normal;color:#000;letter-spacing:-0.168px;">&#x27;cha_fact_spoleto&#x27; </span>
<span class="t" style="left:245.3px;top:1px;height:17px;line-height:17px;font-size:12px;font-weight:normal;color:#000;letter-spacing:-0.277px;">({820e0da2-37a0-4c7b-9399-52ff947f11c0}) </span>
<span class="t" style="left:471.6px;top:1px;height:17px;line-height:17px;font-size:12px;font-weight:normal;color:#000;letter-spacing:-0.075px;">in table </span>
<span class="t" style="left:514px;top:1px;height:17px;line-height:17px;font-size:12px;font-weight:normal;color:#000;letter-spacing:-0.104px;">&#x27;factions&#x27; </span>
<span class="t" style="left:564.2px;top:1px;height:17px;line-height:17px;font-size:12px;font-weight:normal;color:#000;letter-spacing:-0.436px;">has been </span>
<span class="t" style="left:614.4px;top:1px;height:17px;line-height:17px;font-size:12px;font-weight:normal;color:#000;letter-spacing:-0.135px;">changed </span>
<span class="t" style="left:663.1px;top:1px;height:17px;line-height:17px;font-size:12px;font-weight:normal;color:#000;letter-spacing:-0.275px;">from </span>
<span class="t" style="left:692.6px;top:1px;height:17px;line-height:17px;font-size:12px;font-weight:normal;color:#000;letter-spacing:-0.384px;">&#x27;Omraya Rebels&#x27; </span>
<span class="t" style="left:779.7px;top:1px;height:17px;line-height:17px;font-size:12px;font-weight:normal;color:#000;letter-spacing:0.142px;">to </span>
<span class="t" style="left:794.3px;top:1px;height:17px;line-height:17px;font-size:12px;font-weight:normal;color:#000;letter-spacing:-0.249px;">&#x27;Omraya Rebels&#x27;.</span>
</div>
<div style="position:absolute;left:0;top:778px;width:1264px;height:17px">
<span class="t" style="left:7.1px;top:1px;height:17px;line-height:17px;font-size:12px;font-weight:normal;color:#000;letter-spacing:-0.624px;">03:02:10&gt; </span>
<span class="t" style="left:59.8px;top:1px;height:17px;line-height:17px;font-size:12px;font-weight:normal;color:#000;letter-spacing:-0.081px;">Value for record </span>
<span class="t" style="left:147.6px;top:1px;height:17px;line-height:17px;font-size:12px;font-weight:normal;color:#000;letter-spacing:-0.168px;">&#x27;cha_fact_spoleto&#x27; </span>
<span class="t" style="left:245.3px;top:1px;height:17px;line-height:17px;font-size:12px;font-weight:normal;color:#000;letter-spacing:-0.277px;">({820e0da2-37a0-4c7b-9399-52ff947f11c0}) </span>
<span class="t" style="left:471.6px;top:1px;height:17px;line-height:17px;font-size:12px;font-weight:normal;color:#000;letter-spacing:-0.075px;">in table </span>
<span class="t" style="left:514px;top:1px;height:17px;line-height:17px;font-size:12px;font-weight:normal;color:#000;letter-spacing:-0.104px;">&#x27;factions&#x27; </span>
<span class="t" style="left:564.2px;top:1px;height:17px;line-height:17px;font-size:12px;font-weight:normal;color:#000;letter-spacing:-0.436px;">has been </span>
<span class="t" style="left:614.4px;top:1px;height:17px;line-height:17px;font-size:12px;font-weight:normal;color:#000;letter-spacing:-0.135px;">changed </span>
<span class="t" style="left:663.1px;top:1px;height:17px;line-height:17px;font-size:12px;font-weight:normal;color:#000;letter-spacing:-0.275px;">from </span>
<span class="t" style="left:692.6px;top:1px;height:17px;line-height:17px;font-size:12px;font-weight:normal;color:#000;letter-spacing:-0.171px;">&#x27;Omraya&#x27; </span>
<span class="t" style="left:743.3px;top:1px;height:17px;line-height:17px;font-size:12px;font-weight:normal;color:#000;letter-spacing:0.292px;">to </span>
<span class="t" style="left:757.7px;top:1px;height:17px;line-height:17px;font-size:12px;font-weight:normal;color:#000;letter-spacing:-0.077px;">&#x27;Omraya&#x27;.</span>
</div>
<div style="position:absolute;left:0;top:795px;width:1264px;height:17px">
<span class="t" style="left:7.1px;top:1px;height:17px;line-height:17px;font-size:12px;font-weight:normal;color:#000;letter-spacing:-0.624px;">03:02:10&gt; </span>
<span class="t" style="left:59.8px;top:1px;height:17px;line-height:17px;font-size:12px;font-weight:normal;color:#000;letter-spacing:-0.081px;">Value for record </span>
<span class="t" style="left:147.6px;top:1px;height:17px;line-height:17px;font-size:12px;font-weight:normal;color:#000;letter-spacing:-0.168px;">&#x27;cha_fact_spoleto&#x27; </span>
<span class="t" style="left:245.3px;top:1px;height:17px;line-height:17px;font-size:12px;font-weight:normal;color:#000;letter-spacing:-0.277px;">({820e0da2-37a0-4c7b-9399-52ff947f11c0}) </span>
<span class="t" style="left:471.6px;top:1px;height:17px;line-height:17px;font-size:12px;font-weight:normal;color:#000;letter-spacing:-0.075px;">in table </span>
<span class="t" style="left:514px;top:1px;height:17px;line-height:17px;font-size:12px;font-weight:normal;color:#000;letter-spacing:-0.104px;">&#x27;factions&#x27; </span>
<span class="t" style="left:564.2px;top:1px;height:17px;line-height:17px;font-size:12px;font-weight:normal;color:#000;letter-spacing:-0.436px;">has been </span>
<span class="t" style="left:614.4px;top:1px;height:17px;line-height:17px;font-size:12px;font-weight:normal;color:#000;letter-spacing:-0.135px;">changed </span>
<span class="t" style="left:663.1px;top:1px;height:17px;line-height:17px;font-size:12px;font-weight:normal;color:#000;letter-spacing:-0.275px;">from </span>
<span class="t" style="left:692.6px;top:1px;height:17px;line-height:17px;font-size:12px;font-weight:normal;color:#000;letter-spacing:-0.108px;">&#x27;100&#x27; to &#x27;100&#x27;.</span>
</div>
<div style="position:absolute;left:0;top:812px;width:1264px;height:17px">
<span class="t" style="left:7.1px;top:1px;height:17px;line-height:17px;font-size:12px;font-weight:normal;color:#000;letter-spacing:-0.624px;">03:02:10&gt; </span>
<span class="t" style="left:59.8px;top:1px;height:17px;line-height:17px;font-size:12px;font-weight:normal;color:#000;letter-spacing:-0.081px;">Value for record </span>
<span class="t" style="left:147.6px;top:1px;height:17px;line-height:17px;font-size:12px;font-weight:normal;color:#000;letter-spacing:-0.168px;">&#x27;cha_fact_spoleto&#x27; </span>
<span class="t" style="left:245.3px;top:1px;height:17px;line-height:17px;font-size:12px;font-weight:normal;color:#000;letter-spacing:-0.277px;">({820e0da2-37a0-4c7b-9399-52ff947f11c0}) </span>
<span class="t" style="left:471.6px;top:1px;height:17px;line-height:17px;font-size:12px;font-weight:normal;color:#000;letter-spacing:-0.075px;">in table </span>
<span class="t" style="left:514px;top:1px;height:17px;line-height:17px;font-size:12px;font-weight:normal;color:#000;letter-spacing:-0.104px;">&#x27;factions&#x27; </span>
<span class="t" style="left:564.2px;top:1px;height:17px;line-height:17px;font-size:12px;font-weight:normal;color:#000;letter-spacing:-0.436px;">has been </span>
<span class="t" style="left:614.4px;top:1px;height:17px;line-height:17px;font-size:12px;font-weight:normal;color:#000;letter-spacing:-0.135px;">changed </span>
<span class="t" style="left:663.1px;top:1px;height:17px;line-height:17px;font-size:12px;font-weight:normal;color:#000;letter-spacing:-0.275px;">from </span>
<span class="t" style="left:692.6px;top:1px;height:17px;line-height:17px;font-size:12px;font-weight:normal;color:#000;letter-spacing:0.052px;">&#x27;0&#x27; to &#x27;0&#x27;.</span>
</div>
<div style="position:absolute;left:0;top:829px;width:1264px;height:17px">
<span class="t" style="left:7.1px;top:1px;height:17px;line-height:17px;font-size:12px;font-weight:normal;color:#000;letter-spacing:-0.624px;">03:02:10&gt; </span>
<span class="t" style="left:59.8px;top:1px;height:17px;line-height:17px;font-size:12px;font-weight:normal;color:#000;letter-spacing:-0.081px;">Value for record </span>
<span class="t" style="left:147.6px;top:1px;height:17px;line-height:17px;font-size:12px;font-weight:normal;color:#000;letter-spacing:-0.168px;">&#x27;cha_fact_spoleto&#x27; </span>
<span class="t" style="left:245.3px;top:1px;height:17px;line-height:17px;font-size:12px;font-weight:normal;color:#000;letter-spacing:-0.277px;">({820e0da2-37a0-4c7b-9399-52ff947f11c0}) </span>
<span class="t" style="left:471.6px;top:1px;height:17px;line-height:17px;font-size:12px;font-weight:normal;color:#000;letter-spacing:-0.075px;">in table </span>
<span class="t" style="left:514px;top:1px;height:17px;line-height:17px;font-size:12px;font-weight:normal;color:#000;letter-spacing:-0.104px;">&#x27;factions&#x27; </span>
<span class="t" style="left:564.2px;top:1px;height:17px;line-height:17px;font-size:12px;font-weight:normal;color:#000;letter-spacing:-0.436px;">has been </span>
<span class="t" style="left:614.4px;top:1px;height:17px;line-height:17px;font-size:12px;font-weight:normal;color:#000;letter-spacing:-0.135px;">changed </span>
<span class="t" style="left:663.1px;top:1px;height:17px;line-height:17px;font-size:12px;font-weight:normal;color:#000;letter-spacing:-0.275px;">from </span>
<span class="t" style="left:692.6px;top:1px;height:17px;line-height:17px;font-size:12px;font-weight:normal;color:#000;letter-spacing:0.052px;">&#x27;0&#x27; to &#x27;0&#x27;.</span>
</div>
<div style="position:absolute;left:0px;top:894px;width:1268px;height:3px;background:#0a0a12"></div>
</body></html>
